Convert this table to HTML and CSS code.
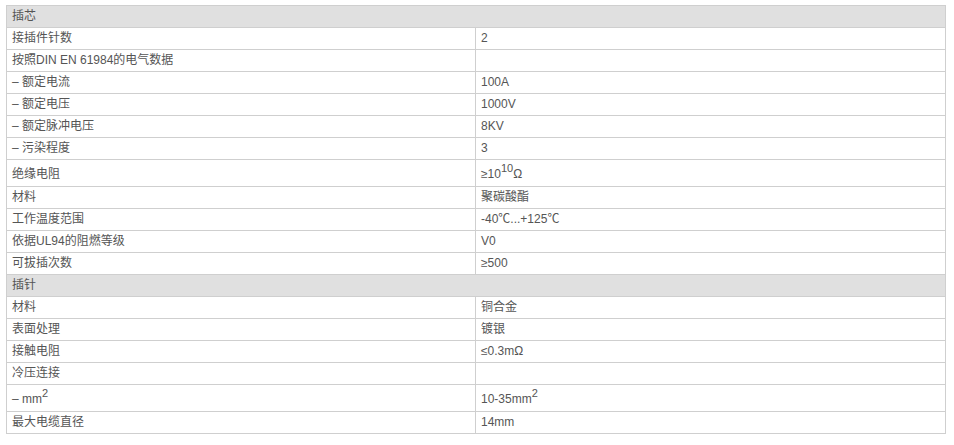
FILE: index.html
```html
<!DOCTYPE html>
<html>
<head>
<meta charset="utf-8">
<link rel="stylesheet" href="styles.css">
</head>
<body>
<table class="spec">
  <colgroup><col class="c1"><col class="c2"></colgroup>
  <tr class="sec"><td colspan="2">插芯</td></tr>
  <tr><td>接插件针数</td><td>2</td></tr>
  <tr><td>按照DIN EN 61984的电气数据</td><td></td></tr>
  <tr><td><span class="dash">–</span>额定电流</td><td>100A</td></tr>
  <tr><td><span class="dash">–</span>额定电压</td><td>1000V</td></tr>
  <tr><td><span class="dash">–</span>额定脉冲电压</td><td>8KV</td></tr>
  <tr><td><span class="dash">–</span>污染程度</td><td>3</td></tr>
  <tr class="tall"><td>绝缘电阻</td><td>≥10<sup>10</sup>Ω</td></tr>
  <tr><td>材料</td><td>聚碳酸酯</td></tr>
  <tr><td>工作温度范围</td><td>-40℃...+125℃</td></tr>
  <tr><td>依据UL94的阻燃等级</td><td>V0</td></tr>
  <tr><td>可拔插次数</td><td>≥500</td></tr>
  <tr class="sec"><td colspan="2">插针</td></tr>
  <tr><td>材料</td><td>铜合金</td></tr>
  <tr><td>表面处理</td><td>镀银</td></tr>
  <tr><td>接触电阻</td><td>≤0.3mΩ</td></tr>
  <tr><td>冷压连接</td><td></td></tr>
  <tr class="tall"><td><span class="dash">–</span>mm<sup>2</sup></td><td>10-35mm<sup>2</sup></td></tr>
  <tr><td>最大电缆直径</td><td>14mm</td></tr>
</table>
</body>
</html>
```

FILE: styles.css
```css
html, body {
  margin: 0;
  padding: 0;
  background: #fff;
}
body {
  padding: 5px 0 0 6px;
  font-family: "Liberation Sans", "Noto Sans CJK SC", sans-serif;
  font-size: 12px;
  color: #555;
}
.spec {
  border-collapse: collapse;
  width: 940px;
  table-layout: fixed;
}
.c1 { width: 469px; }
.spec td {
  border: 1px solid #cfcfcf;
  padding: 0 5px;
  height: 22px;
  line-height: 21px;
  box-sizing: border-box;
  vertical-align: middle;
  white-space: nowrap;
}
.dash {
  display: inline-block;
  width: 10px;
}
.spec .sec td {
  background: #e0e0e0;
}
.spec .tall td {
  height: 27px;
  padding-top: 3px;
}
.spec sup {
  font-size: 11px;
  line-height: 0;
  vertical-align: 6px;
}
```
